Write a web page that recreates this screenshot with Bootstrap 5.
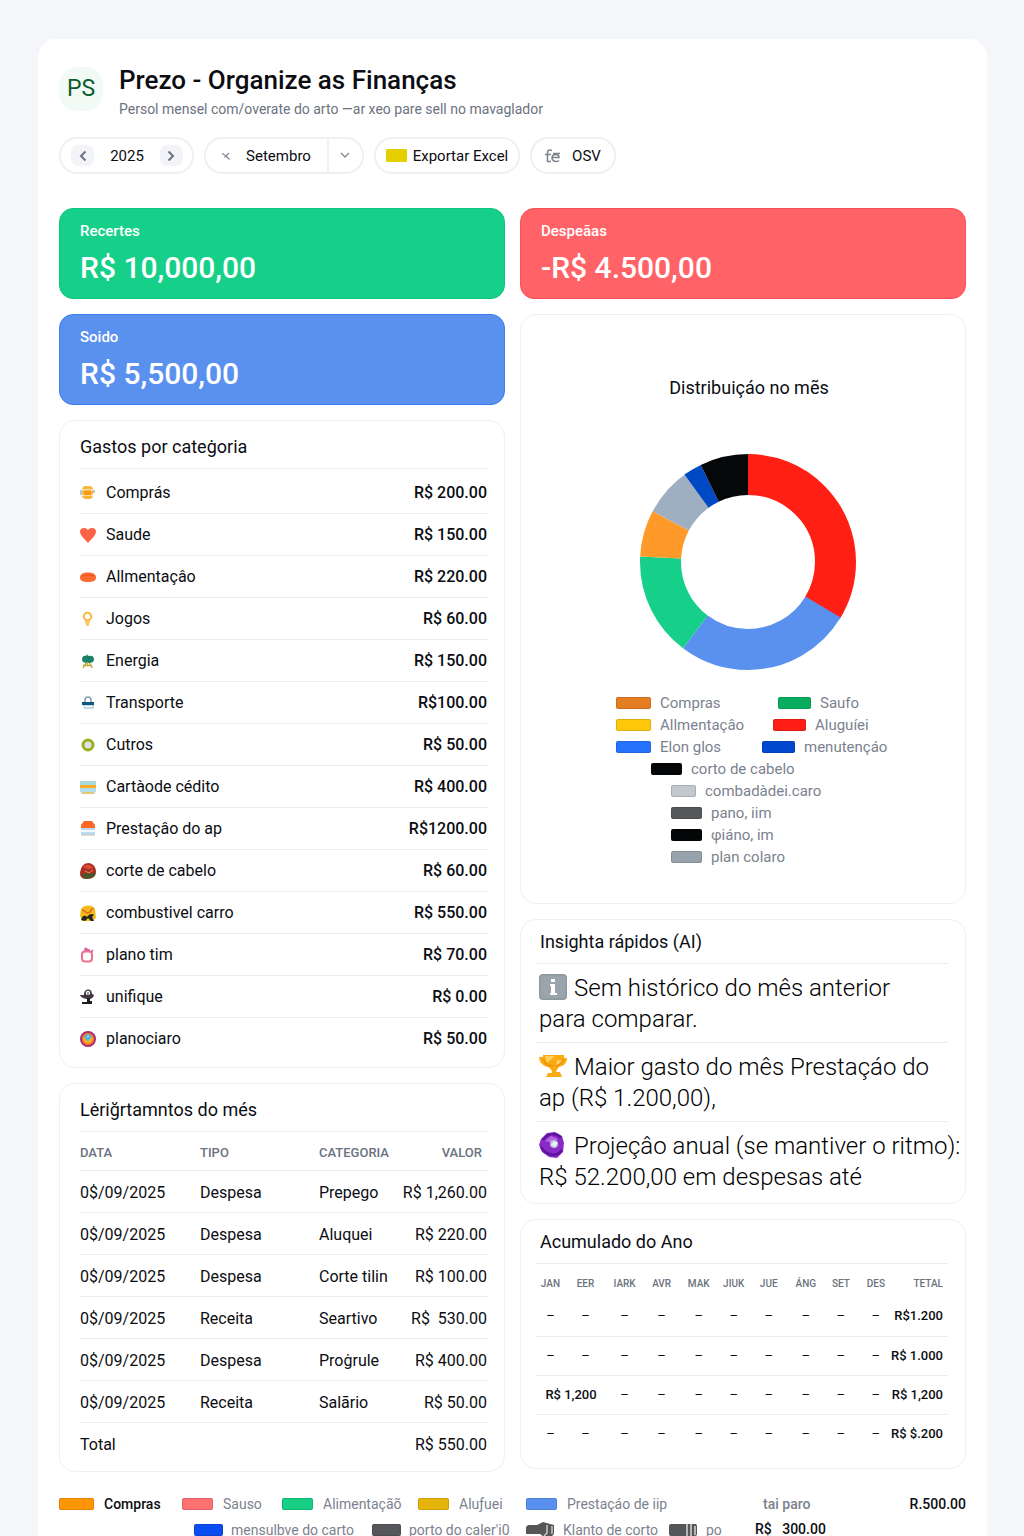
<!DOCTYPE html>
<html lang="pt-BR">
<head>
<meta charset="utf-8">
<meta name="viewport" content="width=device-width, initial-scale=1">
<title>Prezo - Organize as Finanças</title>
<link href="https://cdn.jsdelivr.net/npm/bootstrap@5.3.0/dist/css/bootstrap.min.css" rel="stylesheet">
<style>
body{font-family:Roboto,"Liberation Sans",sans-serif;font-size:16px;line-height:20px;color:#0b0d12;background:#f5f6fa}
.shell{padding:39px 37px 0 38px}
.sheet{background:#fff;border-radius:18px 18px 0 0;padding:28px 21px 0;min-height:calc(100vh - 39px)}
.logo{width:44px;height:44px;border-radius:18px;background:#f2faf6;color:#0d5c2b;font-size:23px}
.app-title{font-size:26px;line-height:26px;font-weight:500;margin:0 0 7px}
.app-sub{font-size:14px;line-height:18px;color:#6b7280;margin:0}
.tools{gap:10px;margin:19px 0 34px}
.pill{height:37px;border:2px solid #eff0f4;border-radius:18px;background:#fff;color:#0b0d12;font-size:15px;line-height:20px;padding:0}
.pill-year{width:135px;padding:0 9px 0 10px}
.pill-month{width:160px}
.pill-excel{width:146px;gap:6px}
.pill-csv{width:86px;gap:11px}
.step{width:23px;height:21px;border:0;border-radius:7px;background:#f3f4f7;padding:0}
.bare{border:0;background:none;padding:0}
.more{width:35px;border-left:2px solid #eff0f4;height:33px}
.gold{width:21px;height:13px;background:#e5cf00;border-radius:1px}
.board{display:grid;grid-template-columns:1fr 1fr;gap:15px}
.stack{display:flex;flex-direction:column;gap:15px;min-width:0}
.kpi{border-radius:14px;height:91px;padding:12px 20px;color:#fff;border:1px solid}
.kpi-g{background:#16d089;border-color:#0cc67b}
.kpi-r{background:#ff6267;border-color:#fb5055}
.kpi-b{background:#5a91ef;border-color:#3c7cf0}
.kpi-name{font-size:15px;line-height:20px;font-weight:500}
.kpi-sum{font-size:30px;line-height:36px;font-weight:500;margin-top:9px}
.panel{border:1px solid #eff0f3;border-radius:16px;background:#fff}
.ptitle{font-size:18px;line-height:20px;font-weight:400;margin:0}
.rule{border-bottom:1px solid #e9ebee}
.p-left{padding:0 15px 0 20px}
.p-left .ptitle{padding:16px 0 11px}
.cats{list-style:none;margin:0;padding:3px 0 7px}
.cats li{height:42px;display:flex;align-items:center;gap:10px;border-bottom:1px solid #e9ebee}
.cats li:last-child{border:0}
.cats svg{width:16px;height:16px;flex:none}
.cats b{font-weight:500;margin-left:auto;padding-right:2px}
.moves{width:100%;margin-bottom:7px}
.moves th{font-size:13px;font-weight:500;color:#6b7280;height:38px;padding:4px 0 0}
.moves td{height:42px;padding:4px 0 0}
.moves tr{border-bottom:1px solid #e9ebee}
.moves tfoot tr{border:0}
.moves .val{text-align:right;padding-right:2px}
.moves th.val{padding-right:7px}
.col-date{width:120px}.col-kind{width:119px}
.chart{height:590px;padding-top:63px}
.chart .ptitle{text-align:center;padding-left:12px}
.donut{display:block;width:216px;height:216px;margin:56px auto 22px;position:relative;left:5px}
.keys{list-style:none;margin:0;padding:0 0 0 95px;color:#7b828e;font-size:15px;line-height:22px}
.keys li{display:flex}
.key{display:flex;align-items:center;gap:9px;white-space:nowrap}
.sw{width:33px;height:12px;border-radius:2px;flex:none;border:1px solid rgba(0,0,0,.12)}
.keys .sw{width:35px}
.keys .key+.key .sw{width:33px}
.keys .in1{padding-left:35px}.keys .in2{padding-left:55px}
.keys .in1 .sw,.keys .in2 .sw{width:31px}
.keys .in2 .c-lg{width:25px}
.k1{width:162px}.k2{width:157px}.k3{width:146px}
.c-or{background:#e47d22}.c-gr{background:#07ad5e}.c-ye{background:#ffc70a}.c-re{background:#ff1e16}.c-bl{background:#2672ff}.c-db{background:#0049cf}.c-bk{background:#050607}.c-lg{background:#c2c8cd}.c-dg{background:#56575a}.c-sl{background:#98a2ac}
.f-or{background:#ff9500}.f-re{background:#ff7070}.f-gr{background:#16cf85}.f-ye{background:#e7b509}.f-bl{background:#5a8ff2}.f-db{background:#0a4df0}
.p-right{padding:0 17px 0 15px}
.p-right .ptitle{padding:12px 0 11px 4px}
.tips{list-style:none;margin:0;padding:0;font-size:24px;font-weight:300;line-height:31px;white-space:nowrap;color:#000}
.tips li{padding:9px 0 7px 3px;border-bottom:1px solid #e9ebee}
.tips li:last-child{border:0;padding-bottom:10px}
.tips svg{width:28px;height:28px;vertical-align:-5px;margin-right:7px}
.year{width:100%;table-layout:fixed;font-size:13px;margin-bottom:15px}
.year th{font-size:10px;font-weight:500;color:#6b7280;height:33px;padding:6px 0 0;text-align:center}
.year td{height:39px;padding:0;text-align:center;white-space:nowrap}
.year tbody tr{border-bottom:1px solid #e9ebee}
.year tbody tr:last-child{border:0}
.year .tot{text-align:right;padding-right:5px;font-weight:500;direction:rtl}
.year .tot bdi{direction:ltr}
.foot{color:#7b828e;font-size:14px;line-height:16px;padding-top:24px;white-space:nowrap}
.foot-row{display:flex;margin-bottom:10px}
.foot-row+.foot-row{padding-left:135px;margin:0;line-height:14px}
.foot .key{gap:10px;flex:none}
.foot .sw{width:31px}
.foot .f-or{width:35px}
.foot-row+.foot-row .key{gap:8px}
.foot-row+.foot-row .sw{width:29px}
.dark{color:#0b0d12;font-weight:500}
.w1{width:123px}.w2{width:100px}.w3{width:136px}.w4{width:108px}.w5{width:237px}
.v1{width:178px}.v2{width:154px}.v3{width:143px}.v4{width:86px}
</style>
<script src="https://cdn.jsdelivr.net/npm/bootstrap@5.3.0/dist/js/bootstrap.bundle.min.js"></script>
</head>
<body>
<div class="shell">
<main class="sheet">
<header class="d-flex">
  <div class="logo d-flex align-items-center justify-content-center">PS</div>
  <div class="ps-3"><h1 class="app-title">Prezo - Organize as Finanças</h1><p class="app-sub">Persol mensel com/overate do arto —ar xeo pare sell no mavaglador</p></div>
</header>
<div class="tools d-flex flex-wrap">
  <div class="pill pill-year d-flex align-items-center justify-content-between">
    <button class="step d-flex align-items-center justify-content-center" aria-label="Ano anterior"><svg width="8" height="12" viewBox="0 0 8 12" fill="none" stroke="#6b7280" stroke-width="2"><path d="M6.500 1.500 2 6l4.500 4.500"/></svg></button>
    <span>2025</span>
    <button class="step d-flex align-items-center justify-content-center" aria-label="Próximo ano"><svg width="8" height="12" viewBox="0 0 8 12" fill="none" stroke="#6b7280" stroke-width="2"><path d="M1.500 1.500 6 6l-4.500 4.500"/></svg></button>
  </div>
  <div class="pill pill-month d-flex align-items-center">
    <button class="bare d-flex ps-3" aria-label="Mês anterior"><svg width="8" height="8" viewBox="0 0 8 8" fill="none" stroke="#858b96" stroke-width="1.300"><path d="M0 1.200 4 4l3-3M4 4l3.500 3.500M4 4 2.500 5.500"/></svg></button>
    <span class="mx-auto">Setembro</span>
    <button class="bare more d-flex align-items-center justify-content-center" aria-label="Escolher mês"><svg width="10" height="7" viewBox="0 0 10 7" fill="none" stroke="#858b96" stroke-width="1.400"><path d="M1 1l4 4 4-4"/></svg></button>
  </div>
  <button class="pill pill-excel d-flex align-items-center justify-content-center"><span class="gold"></span>Exportar Excel</button>
  <button class="pill pill-csv d-flex align-items-center justify-content-center"><svg width="16" height="14" viewBox="0 0 16 14" fill="none" stroke="#7d838d" stroke-width="1.500"><path d="M7 1.500C4 .5 2.500 1 2.500 4v9M0 5.500h6M2.500 12.500H6M7 8.500h7c0-4-6.500-4-7 0-.2 4 4.500 5 7 3M8 4.500h7"/></svg>OSV</button>
</div>
<div class="board">
  <div class="stack">
    <section class="kpi kpi-g"><div class="kpi-name">Recertes</div><div class="kpi-sum">R$ 10,000,00</div></section>
    <section class="kpi kpi-b"><div class="kpi-name">Soido</div><div class="kpi-sum">R$ 5,500,00</div></section>
    <section class="panel p-left">
      <h2 class="ptitle rule">Gastos por cateġoria</h2>
      <ul class="cats">
        <li><svg viewBox="0 0 16 16"><rect x="2" y="1" width="11" height="13" rx="4" fill="#f8b63b"/><path d="M1 5h13M1 10h13" stroke="#fff" stroke-width="1.200"/><rect x="4" y="5.500" width="7" height="4.500" fill="#f49a12"/><path d="M1 5v5M14 5v3" stroke="#9fb6c8" stroke-width="1.500"/></svg>Comprás<b>R$ 200.00</b></li>
        <li><svg viewBox="0 0 16 16"><path d="M8 16C4 11.500 0 8 0 4.500 0 1 5-.5 8 3c3-3.500 8-2 8 1.500C16 8 12 11.500 8 16z" fill="#fb6246"/></svg>Saude<b>R$ 150.00</b></li>
        <li><svg viewBox="0 0 16 16"><path d="M0 8.500C0 5 3 3.500 8 3.500s8 1.500 8 5-3 4.500-8 4.500-8-1-8-4.500z" fill="#fb6b30"/><path d="M2 7c2-1 3 .5 5-.5S11 7 14 6.500" stroke="#e95420" fill="none"/></svg>Allmentaçâo<b>R$ 220.00</b></li>
        <li><svg viewBox="0 0 16 16"><circle cx="7.500" cy="5.500" r="3.700" fill="none" stroke="#fbb73c" stroke-width="2"/><path d="M4.500 9.500h6L8.500 15h-2z" fill="#fbc765"/></svg>Jogos<b>R$ 60.00</b></li>
        <li><svg viewBox="0 0 16 16"><path d="M2 6c0-3 3-4 4-3l1-2 1 2c3-1 6 0 6 3s-2 4-6 4-6-1-6-4z" fill="#1f8069"/><path d="M6 10 3 15M7.500 9v4M9.500 10l3 5M3 12.500h9" stroke="#bba936" stroke-width="1.300" fill="none"/></svg>Energia<b>R$ 150.00</b></li>
        <li><svg viewBox="0 0 16 16"><path d="M5 7V5c0-4 6-4 6 0v2" stroke="#8aa1ae" stroke-width="1.600" fill="none"/><path d="M2 7h12v3H2z" fill="#0d5880"/><path d="M3 10h11v4H4z" fill="#c6d8e0"/><path d="M5 11.500h7" stroke="#fff"/></svg>Transporte<b>R$100.00</b></li>
        <li><svg viewBox="0 0 16 16"><circle cx="8" cy="8" r="5" fill="#e6dce8" stroke="#95b31b" stroke-width="3"/></svg>Cutros<b>R$ 50.00</b></li>
        <li><svg viewBox="0 0 16 16"><path d="M0 2h16v5H0z" fill="#abd8d8"/><path d="M0 6h16v3H0z" fill="#f6ad27"/><path d="M0 9h16v3l-2 3H2l-2-3z" fill="#b3ddea"/><path d="M2 14h12" stroke="#f4c050" stroke-width="1.500"/></svg>Cartàode cédito<b>R$ 400.00</b></li>
        <li><svg viewBox="0 0 16 16"><path d="M4 0h8l3 4v4H1V4z" fill="#fb6724"/><path d="M1 7h14v7H1z" fill="#b9dbf3"/><path d="M1 10h14" stroke="#f4f7fa" stroke-width="2"/><path d="M1 14h14" stroke="#c5bfb6"/></svg>Prestaçâo do ap<b>R$1200.00</b></li>
        <li><svg viewBox="0 0 16 16"><path d="M0 10C1 3 4 0 9 0c5 1 7 5 7 9 0 4-3 7-9 7-5 0-7-2-7-6z" fill="#a92f25"/><path d="M3 4c3-3 7-3 10 1l-5 1z" fill="#e14b35"/><path d="M2 11c4-2 8 2 13-2v3c-3 4-8 4-11 3z" fill="#3f592a"/><path d="M5 8l4 2 4-3" stroke="#e1913e" fill="none"/></svg>corte de cabelo<b>R$ 60.00</b></li>
        <li><svg viewBox="0 0 16 16"><path d="M1 4C5-1 13 0 15 4l1 9-4 3H2L0 11z" fill="#f5bb1d"/><path d="M2 5c3 0 3 3 6 3s2-3 5-5" stroke="#e8602a" stroke-width="1.500" fill="none"/><path d="M1 15c2-6 5-4 6-3 2-3 5-4 7-2l-2 2 2 4h-3l-3-3-3 3z" fill="#24271f"/></svg>combustivel carro<b>R$ 550.00</b></li>
        <li><svg viewBox="0 0 16 16"><rect x="2" y="4.500" width="10" height="10" rx="3" fill="#fff" stroke="#f0708d" stroke-width="2"/><path d="M4 3h6M5 1l3 2M11 5l2-2" stroke="#cf5e9d" stroke-width="1.700"/></svg>plano tim<b>R$ 70.00</b></li>
        <li><svg viewBox="0 0 16 16"><path d="M4 6c0-7 8-7 8-1l2 1c-1 4-4 4-6 4S1 9 0 6z" fill="#40343d"/><circle cx="8" cy="4" r="2.200" fill="#fff"/><path d="M8 3v4" stroke="#40343d"/><path d="M7 9h3v3h2v3H2v-2h5z" fill="#1d1b20"/></svg>unifique<b>R$ 0.00</b></li>
        <li><svg viewBox="0 0 16 16"><circle cx="8" cy="8" r="7" fill="#f6b22d" stroke="#a72871" stroke-width="2"/><circle cx="8" cy="8" r="5.500" fill="none" stroke="#f06a31" stroke-width="1.500"/><path d="M4 6c1-3 6-4 8-1l-3 4-2 1z" fill="#4fb3df"/><path d="M7 6l2-1" stroke="#e7f7c9"/></svg>planociaro<b>R$ 50.00</b></li>
      </ul>
    </section>
    <section class="panel p-left">
      <h2 class="ptitle rule">Lėriğrtamntos do més</h2>
      <table class="moves">
        <colgroup><col class="col-date"><col class="col-kind"><col><col></colgroup>
        <thead><tr><th>DATA</th><th>TIPO</th><th>CATEGORIA</th><th class="val">VALOR</th></tr></thead>
        <tbody>
          <tr><td>0$/09/2025</td><td>Despesa</td><td>Prepego</td><td class="val">R$ 1,260.00</td></tr>
          <tr><td>0$/09/2025</td><td>Despesa</td><td>Aluquei</td><td class="val">R$ 220.00</td></tr>
          <tr><td>0$/09/2025</td><td>Despesa</td><td>Corte tilin</td><td class="val">R$ 100.00</td></tr>
          <tr><td>0$/09/2025</td><td>Receita</td><td>Seartivo</td><td class="val">R$&nbsp; 530.00</td></tr>
          <tr><td>0$/09/2025</td><td>Despesa</td><td>Proġrule</td><td class="val">R$ 400.00</td></tr>
          <tr><td>0$/09/2025</td><td>Receita</td><td>Salārio</td><td class="val">R$ 50.00</td></tr>
        </tbody>
        <tfoot><tr><td colspan="3">Total</td><td class="val">R$ 550.00</td></tr></tfoot>
      </table>
    </section>
  </div>
  <div class="stack">
    <section class="kpi kpi-r"><div class="kpi-name">Despeãas</div><div class="kpi-sum">-R$ 4.500,00</div></section>
    <section class="panel chart">
      <h2 class="ptitle">Distribuiçáo no mẽs</h2>
      <svg class="donut" viewBox="-108 -108 216 216" role="img" aria-label="Distribuição dos gastos">
        <g fill="none" stroke-width="41" transform="rotate(-90)">
          <circle r="87.500" pathLength="360" stroke="#ff1f15" stroke-dasharray="122 360"/>
          <circle r="87.500" pathLength="360" stroke="#5a91ef" stroke-dasharray="96 360" stroke-dashoffset="-121"/>
          <circle r="87.500" pathLength="360" stroke="#16d089" stroke-dasharray="56 360" stroke-dashoffset="-217"/>
          <circle r="87.500" pathLength="360" stroke="#ff9a2a" stroke-dasharray="25 360" stroke-dashoffset="-273"/>
          <circle r="87.500" pathLength="360" stroke="#9dafc1" stroke-dasharray="28 360" stroke-dashoffset="-298"/>
          <circle r="87.500" pathLength="360" stroke="#0049c4" stroke-dasharray="10 360" stroke-dashoffset="-324"/>
          <circle r="87.500" pathLength="360" stroke="#060708" stroke-dasharray="26 360" stroke-dashoffset="-334"/>
        </g>
      </svg>
      <ul class="keys">
        <li><span class="key k1"><i class="sw c-or"></i>Compras</span><span class="key"><i class="sw c-gr"></i>Saufo</span></li>
        <li><span class="key k2"><i class="sw c-ye"></i>Allmentaçâo</span><span class="key"><i class="sw c-re"></i>Aluguíei</span></li>
        <li><span class="key k3"><i class="sw c-bl"></i>Elon glos</span><span class="key"><i class="sw c-db"></i>menutençáo</span></li>
        <li class="in1"><span class="key"><i class="sw c-bk"></i>corto de cabelo</span></li>
        <li class="in2"><span class="key"><i class="sw c-lg"></i>combadàdei.caro</span></li>
        <li class="in2"><span class="key"><i class="sw c-dg"></i>pano, iim</span></li>
        <li class="in2"><span class="key"><i class="sw c-bk"></i>φiáno, im</span></li>
        <li class="in2"><span class="key"><i class="sw c-sl"></i>plan colaro</span></li>
      </ul>
    </section>
    <section class="panel p-right">
      <h2 class="ptitle rule">Insighta rápidos (AI)</h2>
      <ul class="tips">
        <li><svg viewBox="0 0 28 28"><rect y="1" width="28" height="26" rx="4" fill="#8e989f"/><rect x="1.500" y="2.500" width="25" height="23" rx="3" fill="#9aa4aa"/><path d="M12 6h4v3h-4zM11 11h5v9h2v2h-7v-2h1v-7h-1z" fill="#fff"/></svg>Sem histórico do mês anterior<br>para comparar.</li>
        <li><svg viewBox="0 0 28 28"><path d="M4 3h21v3h3c0 6-4 8-8 9-1 2-3 3-3 5h4l2 5H7l2-4h4c0-3-1-4-4-6-5-1-9-5-9-10h4z" fill="#fbab12"/><path d="M6 4h10l-8 7zM18 8l6 1-7 5z" fill="#ffd061"/><path d="M4 7c2 5 6 7 10 7M25 7c-2 4-4 6-8 7" stroke="#ef8e0a" fill="none" stroke-width="1.500"/></svg>Maior gasto do mês Prestaçáo do<br>ap (R$ 1.200,00),</li>
        <li><svg viewBox="0 0 28 28"><path d="M2 8 8 2l8-1 7 4 2 7-1 9-6 6-8-1-7-5L0 14z" fill="#8b2bc7"/><path d="M4 9c4-7 13-8 18-2M2 16c5 8 15 11 21 3" stroke="#5d159b" stroke-width="2.500" fill="none"/><path d="M6 10l6-5 7 3-4 4z" fill="#b469e3"/><circle cx="15" cy="13" r="4" fill="#b9bbdf"/><path d="M12 14l3-4 4 2-3 4z" fill="#e9f3ef"/></svg>Projeçâo anual (se mantiver o ritmo):<br>R$ 52.200,00 em despesas até</li>
      </ul>
    </section>
    <section class="panel p-right">
      <h2 class="ptitle rule">Acumulado do Ano</h2>
      <table class="year">
        <colgroup><col style="width:7%"><col style="width:10%"><col style="width:9%"><col style="width:9%"><col style="width:9%"><col style="width:8%"><col style="width:9%"><col style="width:9%"><col style="width:8%"><col style="width:9%"><col style="width:13%"></colgroup>
        <thead><tr><th>JAN</th><th>EER</th><th>IARK</th><th>AVR</th><th>MAK</th><th>JIUK</th><th>JUE</th><th>ÁNG</th><th>SET</th><th>DES</th><th class="tot">TETAL</th></tr></thead>
        <tbody>
          <tr><td>–</td><td>–</td><td>–</td><td>–</td><td>–</td><td>–</td><td>–</td><td>–</td><td>–</td><td>–</td><td class="tot"><bdi>R$1.200</bdi></td></tr>
          <tr><td>–</td><td>–</td><td>–</td><td>–</td><td>–</td><td>–</td><td>–</td><td>–</td><td>–</td><td>–</td><td class="tot"><bdi>R$ 1.000</bdi></td></tr>
          <tr><td colspan="2" class="fw-medium">R$ 1,200</td><td>–</td><td>–</td><td>–</td><td>–</td><td>–</td><td>–</td><td>–</td><td>–</td><td class="tot"><bdi>R$ 1,200</bdi></td></tr>
          <tr><td>–</td><td>–</td><td>–</td><td>–</td><td>–</td><td>–</td><td>–</td><td>–</td><td>–</td><td>–</td><td class="tot"><bdi>R$ $.200</bdi></td></tr>
        </tbody>
      </table>
    </section>
  </div>
</div>
<footer class="foot">
  <div class="foot-row"><span class="key w1 dark"><i class="sw f-or"></i>Compras</span><span class="key w2"><i class="sw f-re"></i>Sauso</span><span class="key w3"><i class="sw f-gr"></i>Alimentaçãõ</span><span class="key w4"><i class="sw f-ye"></i>Aluƒuei</span><span class="key w5"><i class="sw f-bl"></i>Prestaçáo de iip</span><span class="fw-medium">tai paro</span><span class="dark ms-auto">R.500.00</span></div>
  <div class="foot-row"><span class="key v1"><i class="sw f-db"></i>mensulbve do carto</span><span class="key v2"><i class="sw c-dg"></i>porto do caler'i0</span><span class="key v3"><svg width="29" height="15" viewBox="0 0 29 15"><path d="M0 5l2-2h9l6-3 7 2 4 1v9l-3 3h-7l-4-3H0z" fill="#555658"/><path d="M21 3v8l-3 3M26 4v8" stroke="#c9cacc" stroke-width="1.500" fill="none"/></svg>Klanto de corto</span><span class="key v4"><svg width="29" height="13" viewBox="0 0 29 13"><rect width="28" height="12" y="1" rx="2" fill="#555658"/><path d="M18 1v12M22 1v12M26 3v9" stroke="#d5d6d8" stroke-width="1.500"/></svg>po</span><span class="dark">R$ &nbsp; 300.00</span></div>
</footer>
</main>
</div>
</body>
</html>
